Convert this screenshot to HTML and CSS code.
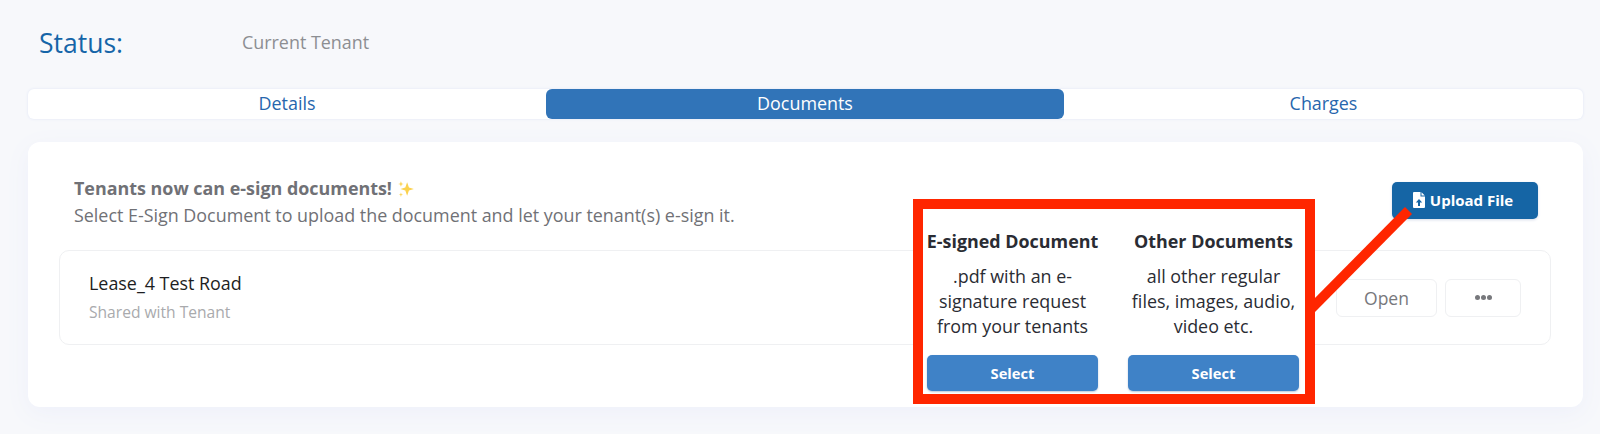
FILE: index.html
```html
<!DOCTYPE html>
<html>
<head>
    <meta charset="utf-8" />
    <title>Tenant Documents</title>
    <link rel="stylesheet" href="styles.css">
</head>
<body>
    <div class="page">
        <div class="status-row">
            <div class="status-label">Status:</div>
            <div class="status-value">Current Tenant</div>
        </div>

        <div class="tabs">
            <div class="tab">Details</div>
            <div class="tab active">Documents</div>
            <div class="tab">Charges</div>
        </div>

        <div class="card">
            <div class="card-head">
                <div class="intro">
                    <div class="intro-title">Tenants now can e-sign documents!
                        <svg class="sparkles" viewBox="0 0 16 16" width="18" height="18">
                            <path d="M9 2 L10.6 6.6 L15 8 L10.6 9.4 L9 14 L7.4 9.4 L3 8 L7.4 6.6 Z" fill="#fbd24e"/>
                            <path d="M3.5 1 L4.2 3 L6 3.5 L4.2 4 L3.5 6 L2.8 4 L1 3.5 L2.8 3 Z" fill="#fbd24e"/>
                            <path d="M3.5 11 L4 12.6 L5.5 13 L4 13.4 L3.5 15 L3 13.4 L1.5 13 L3 12.6 Z" fill="#fbd24e"/>
                        </svg>
                    </div>
                    <div class="intro-text">Select E-Sign Document to upload the document and let your tenant(s) e-sign it.</div>
                </div>
                <button class="btn-upload">
                    <svg viewBox="0 0 12 16" width="12" height="16">
                        <path fill="#fff" fill-rule="evenodd" d="M1 0H7.5V4.5H12V15a1 1 0 0 1-1 1H1a1 1 0 0 1-1-1V1a1 1 0 0 1 1-1ZM8.5 0.2 11.8 3.5H8.5ZM6 7 2.8 10.6H5V14H7V10.6H9.2Z"/>
                    </svg>
                    <span class="upload-label">Upload File</span>
                </button>
            </div>

            <div class="doc-row">
                <div class="doc-info">
                    <div class="doc-name">Lease_4 Test Road</div>
                    <div class="doc-shared">Shared with Tenant</div>
                </div>
                <div class="doc-actions">
                    <button class="btn-light btn-open">Open</button>
                    <button class="btn-light btn-more">
                        <span class="dot"></span><span class="dot"></span><span class="dot"></span>
                    </button>
                </div>
            </div>
        </div>

        <!-- annotation on top of the screenshot -->
        <svg class="callout-line" viewBox="0 0 1600 434" width="1600" height="434">
            <polygon points="1405,207 1412,214 1315,312 1310,303" fill="#ff2600"/>
        </svg>
        <div class="callout">
            <div class="option">
                <h4>E-signed Document</h4>
                <p>.pdf with an e-signature request from your tenants</p>
                <button class="btn-select">Select</button>
            </div>
            <div class="option">
                <h4>Other Documents</h4>
                <p>all other regular files, images, audio, video etc.</p>
                <button class="btn-select">Select</button>
            </div>
        </div>
    </div>
</body>
</html>
```

FILE: styles.css
```css
* {
	box-sizing: border-box;
}

html, body {
	margin: 0;
	height: 434px;
	overflow: hidden;
}

body {
	background-color: #f7f8fb;
	font-family: "Open Sans", "Liberation Sans", sans-serif;
}

button {
	font-family: inherit;
	cursor: pointer;
}

.page {
	position: relative;
	height: 434px;
	padding: 25px 17px 0 28px;
}

/* status */
.status-row {
	display: flex;
	align-items: center;
	height: 35px;
	padding-left: 11px;
}

.status-label {
	width: 203px;
	font-size: 26.5px;
	color: #1565a8;
}

.status-value {
	font-size: 17.9px;
	color: #8c8e92;
	margin-top: -2px;
}

/* tabs */
.tabs {
	display: grid;
	grid-template-columns: 518px 518px 1fr;
	height: 30px;
	margin-top: 29px;
	background-color: #fff;
	border-radius: 6px;
	box-shadow: 0 0 3px #dfe4f6;
}

.tab {
	display: flex;
	align-items: center;
	justify-content: center;
	padding-bottom: 2px;
	font-size: 17.9px;
	color: #2766ad;
	border-radius: 6px;
}

.tab.active {
	background-color: #3174b8;
	color: #fff;
}

/* card */
.card {
	height: 265px;
	margin-top: 23px;
	padding: 36px 32px 0 31px;
	background-color: #fff;
	border-radius: 12px;
	box-shadow: 0 6px 24px #eef0fa;
}

.card-head {
	display: flex;
	justify-content: space-between;
	align-items: flex-start;
	padding: 0 13px 0 15px;
}

.intro {
	font-size: 17.9px;
	line-height: 27px;
	color: #707176;
}

.intro-title {
	font-weight: 700;
	margin-top: -3px;
}

.sparkles {
	vertical-align: -3px;
}

.btn-upload {
	display: flex;
	align-items: center;
	justify-content: center;
	gap: 5px;
	width: 146px;
	height: 37px;
	margin-top: 4px;
	padding: 0 4px 2px 0;
	border: none;
	border-radius: 5px;
	background-color: #1565a5;
	color: #fff;
	font-size: 15px;
	font-weight: 700;
	box-shadow: 0 1px 3px #d5dbe8;
}

.doc-row {
	display: flex;
	justify-content: space-between;
	align-items: center;
	height: 95px;
	margin-top: 21px;
	padding: 0 29px 0 29px;
	border: 1px solid #eff0f2;
	border-radius: 10px;
}

.doc-info {
	margin-top: -2px;
}

.doc-name {
	font-size: 17.9px;
	line-height: 24px;
	color: #1d1e22;
}

.doc-shared {
	margin-top: 7px;
	font-size: 15.6px;
	line-height: 21px;
	color: #a9aaad;
}

.doc-actions {
	display: flex;
	gap: 8px;
}

.btn-light {
	display: flex;
	align-items: center;
	justify-content: center;
	gap: 1px;
	height: 38px;
	border: 1px solid #eff0f2;
	border-radius: 6px;
	background-color: #fff;
	color: #77787c;
	font-size: 17.5px;
}

.btn-open {
	width: 101px;
}

.btn-more {
	width: 76px;
}

.dot {
	width: 5px;
	height: 5px;
	border-radius: 50%;
	background-color: #77787c;
}

/* annotation */
.callout-line {
	position: absolute;
	top: 0;
	left: 0;
}

.callout {
	position: absolute;
	left: 913px;
	top: 199px;
	width: 402px;
	height: 205px;
	display: grid;
	grid-template-columns: 171px 171px;
	column-gap: 30px;
	padding: 0 0 3px 4px;
	background-color: #fff;
	border: 10px solid #ff2600;
}

.option {
	display: flex;
	flex-direction: column;
	align-items: center;
	text-align: center;
	color: #2a2c33;
}

.option h4 {
	margin: 20px -6px 0;
	font-size: 17.9px;
	line-height: 24px;
	font-weight: 700;
	white-space: nowrap;
}

.option p {
	margin: 11px 0 0;
	font-size: 17.9px;
	line-height: 25px;
	flex: 1;
}

.btn-select {
	width: 100%;
	height: 36px;
	border: none;
	border-radius: 5px;
	background-color: #3f82c7;
	color: #fff;
	font-size: 14.7px;
	font-weight: 700;
	box-shadow: 0 1px 2px #b9c7da;
}
```
